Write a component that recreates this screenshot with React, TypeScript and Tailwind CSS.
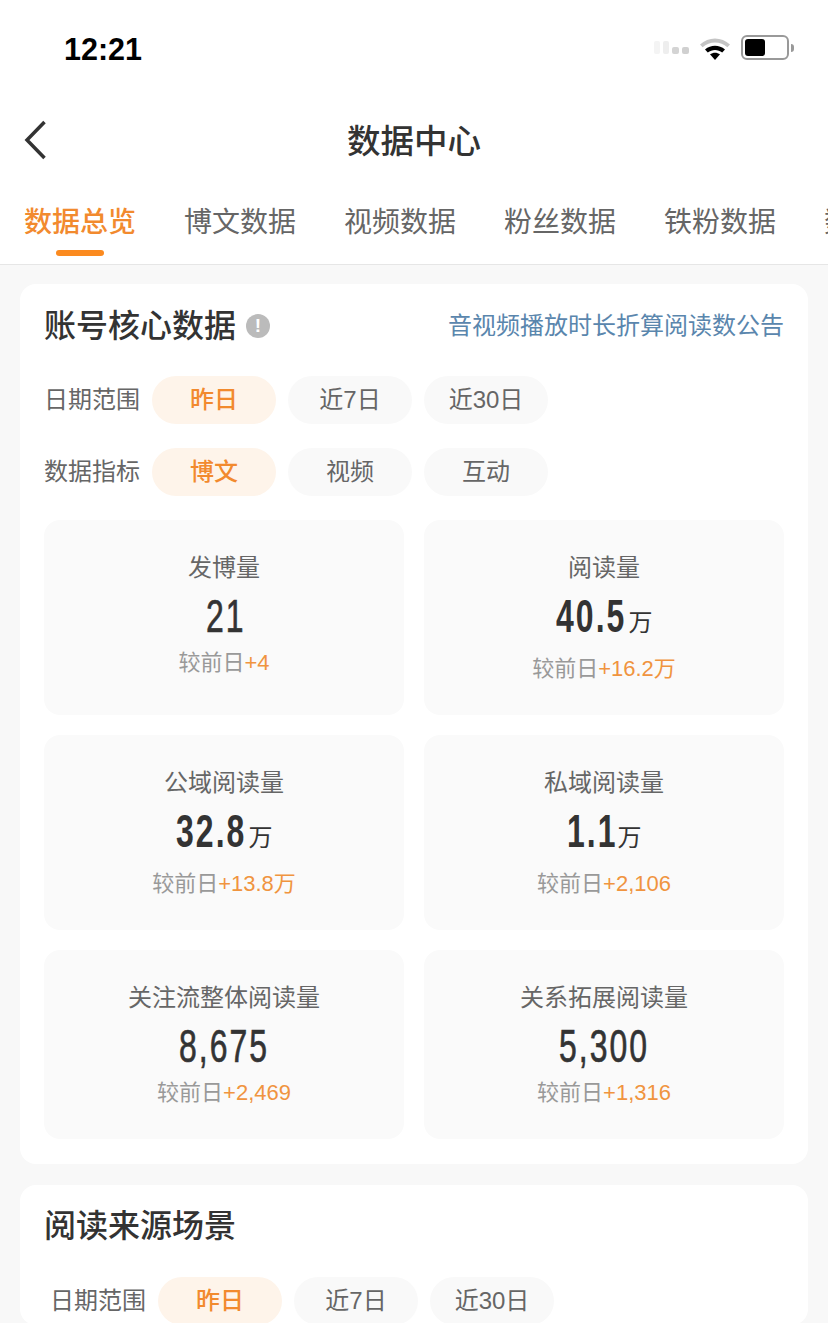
import React from "react";

const CJK = "font-['Liberation_Sans','Noto_Sans_CJK_SC',sans-serif]";

const tabs = ["数据总览", "博文数据", "视频数据", "粉丝数据", "铁粉数据", "数据"];

const stats = [
  { name: "发博量", num: "21", w: "w-[36px]", unit: "", before: "+4", h: "h-[195px]", row: "h-[57px]", face: "font-normal [-webkit-text-stroke:0.7px_#333333]" },
  { name: "阅读量", num: "40.5", w: "w-[71px]", unit: "万", before: "+16.2万", h: "h-[195px]", row: "h-[63px]", face: "font-bold" },
  { name: "公域阅读量", num: "32.8", w: "w-[71px]", unit: "万", before: "+13.8万", h: "h-[195px]", row: "h-[63px]", face: "font-bold" },
  { name: "私域阅读量", num: "1.1", w: "w-[49px]", unit: "万", before: "+2,106", h: "h-[195px]", row: "h-[63px]", face: "font-bold" },
  { name: "关注流整体阅读量", num: "8,675", w: "w-[90px]", unit: "", before: "+2,469", h: "h-[189px]", row: "h-[57px]", face: "font-normal [-webkit-text-stroke:0.7px_#333333]" },
  { name: "关系拓展阅读量", num: "5,300", w: "w-[90px]", unit: "", before: "+1,316", h: "h-[189px]", row: "h-[57px]", face: "font-normal [-webkit-text-stroke:0.7px_#333333]" },
];

const Chip = ({ label, active }: { label: string; active?: boolean }) => (
  <div
    className={
      active
        ? "flex h-12 w-[124px] items-center justify-center rounded-full bg-[#fef4ea] text-2xl font-medium text-[#f28a2e]"
        : "flex h-12 w-[124px] items-center justify-center rounded-full bg-[#f9f9f9] text-2xl text-[#666666]"
    }
  >
    {label}
  </div>
);

const ChipRow = ({ label, chips, className }: { label: string; chips: string[]; className: string }) => (
  <div className={"flex items-center gap-3 " + className}>
    <div className="w-[96px] text-right text-2xl text-[#666666]">{label}</div>
    {chips.map((c, i) => (
      <Chip key={c} label={c} active={i === 0} />
    ))}
  </div>
);

const StatCard = ({ s }: { s: (typeof stats)[number] }) => (
  <div className={"flex flex-col items-center rounded-2xl bg-[#fafafa] pt-[33px] " + s.h}>
    <div className="h-[30px] text-2xl leading-[30px] text-[#666666]">{s.name}</div>
    <div className={"mt-[6px] flex items-start " + s.row}>
      <span className={"inline-block h-[54px] " + s.w}>
        <span
          className={
            "inline-block origin-left scale-x-[0.68] text-[47px] leading-[54px] tracking-[3px] whitespace-nowrap text-[#333333] " +
            s.face
          }
        >
          {s.num}
        </span>
      </span>
      {s.unit && <span className="mt-[14px] ml-[2px] text-2xl leading-[40px] text-[#333333]">{s.unit}</span>}
    </div>
    <div className="mt-[2px] text-[22px] leading-[30px] text-[#999999]">
      较前日<span className="text-[#f0943f]">{s.before}</span>
    </div>
  </div>
);

export default function App() {
  return (
    <div className={"h-[1323px] w-[828px] overflow-hidden bg-[#f8f8f8] " + CJK}>
      <div className="bg-white">
        {/* status bar */}
        <div className="flex h-[99px] items-start justify-between pt-[31px] pr-[34px] pl-[64px]">
          <div className="text-[30.500px] leading-9 font-bold text-black">12:21</div>
          <div className="flex items-center gap-[10px] pt-[4px]">
            <div className="flex items-center gap-[3px]">
              <div className="h-[13px] w-[6px] rounded-[2px] bg-[#f4f4f4]" />
              <div className="h-[13px] w-[6px] rounded-[2px] bg-[#eeeeee]" />
              <div className="mt-[5px] h-[7px] w-[7px] rounded-[2px] bg-[#d4d4d4]" />
              <div className="mt-[5px] h-[7px] w-[7px] rounded-[2px] bg-[#d0d0d0]" />
            </div>
            <svg width="32" height="24" viewBox="0 0 32 24">
              <path d="M1 8.500C9.500 .5 22.500 .5 31 8.500l-2.600 2.800C21.500 5 10.500 5 3.600 11.300z" fill="#c4c4c4" />
              <path d="M6 13.500c5.800-5 14.200-5 20 0l-2.800 3c-4.200-3.400-10.200-3.400-14.400 0z" fill="#000" />
              <path d="M11 18.300c3-2.200 7-2.200 10 0L16 24z" fill="#000" />
            </svg>
            <div className="flex items-center">
              <div className="flex h-[25px] w-[48px] items-center rounded-[6px] border-[2px] border-[#999999] p-[2px]">
                <div className="h-[17px] w-[20px] rounded-[3px] bg-black" />
              </div>
              <div className="ml-[2px] h-[8px] w-[3px] rounded-r-[3px] bg-[#999999]" />
            </div>
          </div>
        </div>
        {/* nav */}
        <div className="relative flex h-[86px] items-center justify-center">
          <svg className="absolute top-[21px] left-[23px]" width="26" height="40" viewBox="0 0 26 40" fill="none">
            <path d="M21.500 2 4 20l17.500 18" stroke="#333333" strokeWidth="3.500" />
          </svg>
          <div className="text-[33.500px] leading-none font-medium text-[#333333]">数据中心</div>
        </div>
        {/* tabs */}
        <div className="flex h-[80px] gap-12 overflow-hidden border-b border-[#e6e6e6] pl-6">
          {tabs.map((t, i) => (
            <div key={i} className="relative shrink-0 pt-[18px]">
              <div
                className={
                  i === 0
                    ? "text-[28px] leading-[40px] font-medium whitespace-nowrap text-[#f28a2e]"
                    : "text-[28px] leading-[40px] whitespace-nowrap text-[#666666]"
                }
              >
                {t}
              </div>
              {i === 0 && <div className="absolute top-[65px] left-8 h-[6px] w-[48px] rounded-full bg-[#fb8a1f]" />}
            </div>
          ))}
        </div>
      </div>

      <div className="px-5 pt-[19px]">
        <div className="h-[880px] rounded-2xl bg-white px-6">
          <div className="flex h-[92px] items-center justify-between pb-[9px]">
            <div className="flex items-center gap-[10px]">
              <div className="text-[32px] leading-none font-medium text-[#333333]">账号核心数据</div>
              <div className="flex h-6 w-6 items-center justify-center rounded-full bg-[#bbbbbb] text-[19px] leading-none font-bold text-white">
                !
              </div>
            </div>
            <div className="text-2xl text-[#5a86ad]">音视频播放时长折算阅读数公告</div>
          </div>
          <ChipRow label="日期范围" chips={["昨日", "近7日", "近30日"]} className="" />
          <ChipRow label="数据指标" chips={["博文", "视频", "互动"]} className="mt-6" />
          <div className="mt-6 grid grid-cols-2 gap-x-5 gap-y-5">
            {stats.map((s) => (
              <StatCard key={s.name} s={s} />
            ))}
          </div>
        </div>

        <div className="mt-[21px] rounded-2xl bg-white px-6">
          <div className="flex h-[81px] items-center text-[32px] font-medium text-[#333333]">阅读来源场景</div>
          <ChipRow label="日期范围" chips={["昨日", "近7日", "近30日"]} className="mt-[11px] pl-[6px]" />
        </div>
      </div>
    </div>
  );
}
